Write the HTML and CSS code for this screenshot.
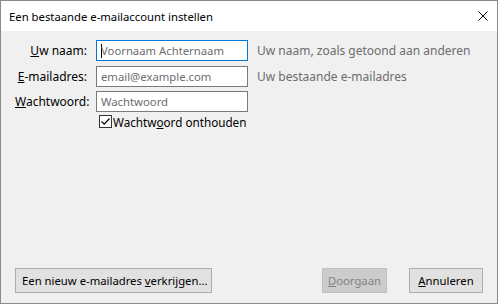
FILE: index.html
```html
<!DOCTYPE html>
<html lang="nl">
<head>
    <meta charset="UTF-8">
    <title>Een bestaande e-mailaccount instellen</title>
    <link rel="stylesheet" href="styles.css">
</head>
<body>
    <div class="window">
        <div class="titlebar">
            <span class="title">Een bestaande e-mailaccount instellen</span>
            <svg class="close" width="10" height="10" viewBox="0 0 10 10">
                <path d="M0.5 0.5 L9.5 9.5 M9.5 0.5 L0.5 9.5" stroke="#000" stroke-width="1" fill="none"/>
            </svg>
        </div>
        <div class="content">
            <div class="form">
                <label class="label"><u>U</u>w naam:</label>
                <div class="input focused"><span class="caret"></span><span class="placeholder">Voornaam Achternaam</span></div>
                <span class="hint">Uw naam, zoals getoond aan anderen</span>

                <label class="label"><u>E</u>-mailadres:</label>
                <div class="input"><span class="placeholder">email@example.com</span></div>
                <span class="hint">Uw bestaande e-mailadres</span>

                <label class="label"><u>W</u>achtwoord:</label>
                <div class="input"><span class="placeholder">Wachtwoord</span></div>
                <span class="hint"></span>

                <span></span>
                <div class="check-row">
                    <span class="checkbox">
                        <svg width="11" height="11" viewBox="0 0 11 11">
                            <path d="M1.5 5.5 L4.2 8.2 L9.5 2.5" stroke="#000" stroke-width="1.2" fill="none"/>
                        </svg>
                    </span>
                    <span>Wachtw<u>o</u>ord onthouden</span>
                </div>
            </div>
            <div class="buttons">
                <button class="btn wide">Een nieuw e-mailadres <u>v</u>erkrijgen...</button>
                <span class="spacer"></span>
                <button class="btn next disabled"><u>D</u>oorgaan</button>
                <button class="btn cancel"><u>A</u>nnuleren</button>
            </div>
        </div>
    </div>
</body>
</html>
```

FILE: styles.css
```css
html, body {
    margin: 0;
    padding: 0;
}
body {
    font-family: "Noto Sans", "Open Sans", sans-serif;
    font-size: 12px;
    color: #000;
}
.window {
    width: 498px;
    height: 304px;
    box-sizing: border-box;
    border: 1px solid #8a8a8a;
    display: flex;
    flex-direction: column;
}
.titlebar {
    height: 30px;
    background: #fff;
    display: flex;
    align-items: center;
    padding: 0 9px 0 8px;
}
.title {
    flex: 1;
    font-size: 11.3px;
}
.content {
    flex: 1;
    background: #f0f0f0;
    padding: 9px 14px 10px 14px;
    display: flex;
    flex-direction: column;
}
.form {
    display: grid;
    grid-template-columns: 72px 152px auto;
    column-gap: 9px;
    row-gap: 4.5px;
    align-items: center;
}
.label {
    text-align: right;
}
.input {
    height: 21px;
    box-sizing: border-box;
    border: 1px solid #7a7a7a;
    background: #fff;
    display: flex;
    align-items: center;
    padding-left: 4px;
}
.input.focused {
    border-color: #0078d7;
}
.caret {
    width: 1px;
    height: 14px;
    background: #000;
    margin-right: -1px;
}
.placeholder {
    color: #6d6d6d;
    font-size: 11.3px;
}
.hint {
    color: #6d6d6d;
}
.check-row {
    grid-column: 2 / 4;
    display: flex;
    align-items: center;
    gap: 1px;
    margin-top: -3px;
    margin-left: 3px;
    font-size: 11.7px;
}
.checkbox {
    width: 13px;
    height: 13px;
    box-sizing: border-box;
    border: 1px solid #333;
    background: #fff;
    display: flex;
    align-items: center;
    justify-content: center;
}
.buttons {
    margin-top: auto;
    display: flex;
    gap: 22px;
}
.spacer {
    flex: 1;
}
.btn {
    height: 25px;
    box-sizing: border-box;
    font: inherit;
    font-size: 11.3px;
    color: #000;
    background: #e1e1e1;
    border: 1px solid #adadad;
    padding: 0;
    white-space: nowrap;
}
.btn.wide {
    width: 197px;
    text-align: left;
    padding-left: 6px;
}
.btn.next {
    width: 65px;
}
.btn.cancel {
    width: 74px;
}
.btn.disabled {
    background: #cccccc;
    border-color: #bfbfbf;
    color: #838383;
}
```
